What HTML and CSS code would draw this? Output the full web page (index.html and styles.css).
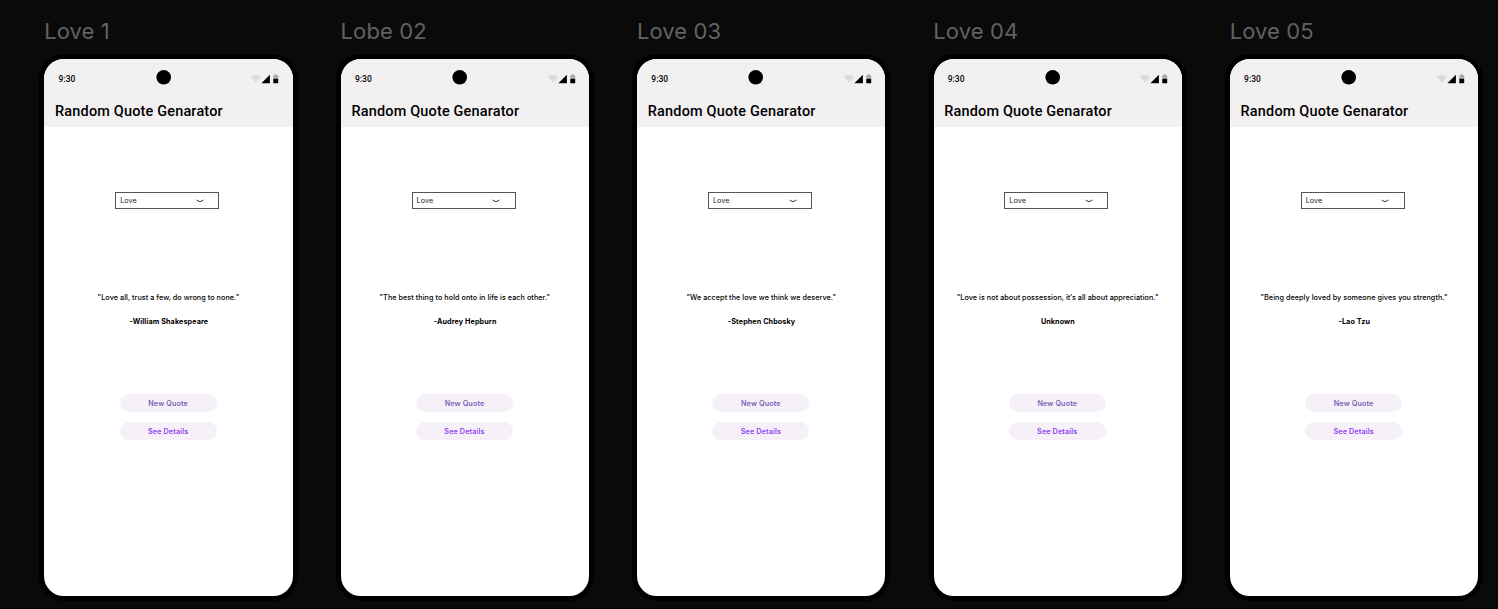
FILE: index.html
```
<!DOCTYPE html>
<html lang="en">
<head>
<meta charset="utf-8">
<title>Random Quote Genarator</title>
<link rel="stylesheet" href="styles.css">
</head>
<body>
<main class="board" id="board"></main>
<template id="frame">
  <section class="frame">
    <h2 class="label"></h2>
    <div class="phone">
      <header class="top">
        <div class="status">
          <span class="time">9:30</span>
          <svg class="camera" width="15" height="15" viewBox="0 0 15 15"><circle cx="7.7" cy="7.3" r="7.3"/></svg>
          <svg class="icons" width="28" height="10" viewBox="0 0 28 10">
            <path d="M0 2.7C2.8.2 7.2.2 10 2.7L5 9Z" fill="#dddbdd"/>
            <path d="M10.4 9.2 18.9.7V9.2Z" fill="#000"/>
            <path d="M23.8.2h2v1h1.4v3.6h-4.9V1.2h1.5Z" fill="#aaa8aa"/>
            <path d="M22.3 4.8h4.9v3.9q0 .5-.5.5h-3.9q-.5 0-.5-.5Z" fill="#000"/>
          </svg>
        </div>
        <h1 class="title">Random Quote Genarator</h1>
      </header>
      <div class="select">
        <span>Love</span>
        <svg class="chevron" width="8" height="4" viewBox="0 0 8 4"><path d="M.6 1 2.7 2.2Q4 2.9 5.3 2.2L7.4 1" fill="none" stroke="#333" stroke-width="1"/></svg>
      </div>
      <p class="quote"></p>
      <p class="author"></p>
      <div class="actions">
        <button class="btn new">New Quote</button>
        <button class="btn details">See Details</button>
      </div>
    </div>
  </section>
</template>
<script src="app.js"></script>
</body>
</html>
```

FILE: styles.css
```
* { box-sizing: border-box; margin: 0; padding: 0; }
body { width: 1498px; height: 609px; overflow: hidden; background: #0a0a0a; font-family: Inter, "Liberation Sans", sans-serif; }
.board { display: flex; gap: 38.2px; width: 1498px; height: 609px; padding: 18px 0 0 39.4px; overflow: hidden; border-bottom: 1px solid #000; }
.frame { flex: none; width: 258.2px; }
.label { height: 36px; padding-left: 4.8px; font-size: 22px; line-height: 27px; font-weight: 400; letter-spacing: .1px; color: #626262; white-space: nowrap; }
.phone { display: flex; flex-direction: column; align-items: center; height: 547.4px; border: 5px solid #000; border-radius: 25px; background: #fff; overflow: hidden; }
.top { width: 100%; height: 68px; flex: none; background: #f3f0f2; font-family: Roboto, sans-serif; }
.status { display: grid; grid-template-columns: 97px 15px 1fr; align-items: center; height: 36px; padding: 0 13.4px 0 14.2px; }
.time { font-size: 8.45px; font-weight: 500; line-height: 12px; padding-top: 3px; letter-spacing: .04px; }
.icons { justify-self: end; margin-top: 4px; }
.title { padding-left: 10.7px; margin-top: 7px; font-size: 14.46px; line-height: 19px; font-weight: 500; letter-spacing: .18px; color: #000; white-space: nowrap; }
.select { display: flex; flex: none; align-items: center; justify-content: space-between; width: 104px; height: 17px; margin-top: 65px; margin-left: -2.6px; padding: 0 14.4px 0 4px; border: 1px solid #555; font-size: 7.23px; letter-spacing: .08px; color: #222; }
.quote { margin-top: 84px; font-size: 7.23px; line-height: 10px; font-weight: 500; letter-spacing: .055px; white-space: nowrap; }
.author { margin-top: 14px; margin-left: .6px; font-size: 7.23px; line-height: 10px; font-weight: 700; letter-spacing: .09px; white-space: nowrap; }
.actions { display: flex; flex-direction: column; gap: 10px; margin-top: 66.5px; margin-right: .7px; }
.btn { width: 97px; height: 18.2px; border: 0; border-radius: 10px; background: #f6f1f9; padding-top: 1px; font: 600 7.23px/17px Inter, sans-serif; letter-spacing: .12px; }
.new { color: #8062b5; }
.details { color: #9340f5; }
```

FILE: app.js
```
const frames = [
  ["Love 1", "\"Love all, trust a few, do wrong to none.\"", "-William Shakespeare"],
  ["Lobe 02", "\"The best thing to hold onto in life is each other.\"", "-Audrey Hepburn"],
  ["Love 03", "\"We accept the love we think we deserve.\"", "-Stephen Chbosky"],
  ["Love 04", "\"Love is not about possession, it’s all about appreciation.\"", "Unknown"],
  ["Love 05", "\"Being deeply loved by someone gives you strength.\"", "-Lao Tzu"]
];
const template = document.getElementById("frame");
for (const [label, quote, author] of frames) {
  const node = template.content.cloneNode(true);
  node.querySelector(".label").textContent = label;
  node.querySelector(".quote").textContent = quote;
  node.querySelector(".author").textContent = author;
  document.getElementById("board").append(node);
}
```
